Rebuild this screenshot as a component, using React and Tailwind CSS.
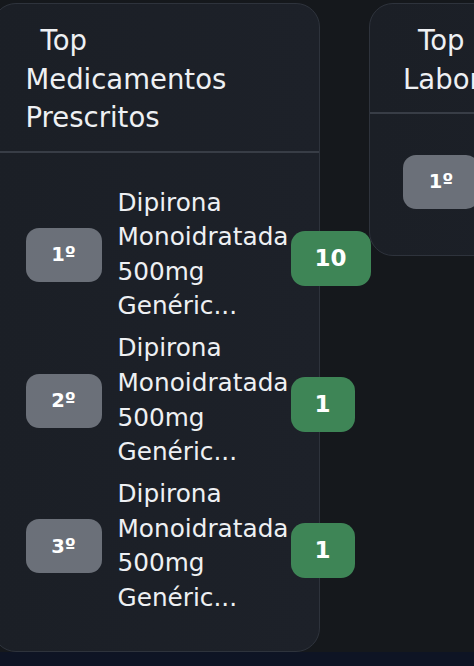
import React from 'react';

const medicamentos = [
  { pos: '1º', nome: 'Dipirona Monoidratada 500mg Genéric...', total: 10 },
  { pos: '2º', nome: 'Dipirona Monoidratada 500mg Genéric...', total: 1 },
  { pos: '3º', nome: 'Dipirona Monoidratada 500mg Genéric...', total: 1 },
];

const laboratorios = [
  { pos: '1º', nome: 'Laboratório Genérico', total: 12 },
];

const RankRow = ({ item }) => (
  <div className="flex items-center justify-between gap-[2px]">
    <div className="flex items-center gap-[16px]">
      <div className="w-[76px] h-[54px] shrink-0 rounded-[13px] bg-[#6b7079] flex items-center justify-center text-[19.5px] font-bold text-white">
        {item.pos}
      </div>
      <div className="text-[24.75px] leading-[34.6px] text-[#eef0f3]">{item.nome}</div>
    </div>
    <div className="h-[55px] mt-[8px] shrink-0 px-[24px] rounded-[14px] bg-[#3e8556] flex items-center justify-center text-[23px] font-bold text-white">
      {item.total}
    </div>
  </div>
);

const Card = ({ titulo, items, bodyClass }) => (
  <div className="w-[328.5px] shrink-0 rounded-[24px] border-[1.5px] border-[#2e333c] bg-[linear-gradient(90deg,#1b1f26,#1d2129)]">
    <div className="px-[33px] pt-[17px] pb-[14px] border-b-2 border-[#383d46] text-[27.5px] leading-[38.5px] text-[#eef0f3]">
      <span className="inline-block w-[15px]" />
      {titulo}
    </div>
    <div className={`px-[33px] flex flex-col gap-[7.5px] ${bodyClass}`}>
      {items.map((it) => (
        <RankRow key={it.pos} item={it} />
      ))}
    </div>
  </div>
);

export default function App() {
  return (
    <div className="min-h-screen bg-[#0e1424]" style={{ fontFamily: '"DejaVu Sans", Verdana, sans-serif' }}>
      <div className="h-[652px] overflow-hidden bg-[#15181c] pt-[3px]">
        <div className="flex items-start gap-[49px] ml-[-8.5px]">
          <Card titulo="Top Medicamentos Prescritos" items={medicamentos} bodyClass="pt-[33px] pb-[35px]" />
          <Card
            titulo={<>Top<br />Laboratórios</>}
            items={laboratorios}
            bodyClass="pt-[33px] pb-[39px]"
          />
        </div>
      </div>
    </div>
  );
}
